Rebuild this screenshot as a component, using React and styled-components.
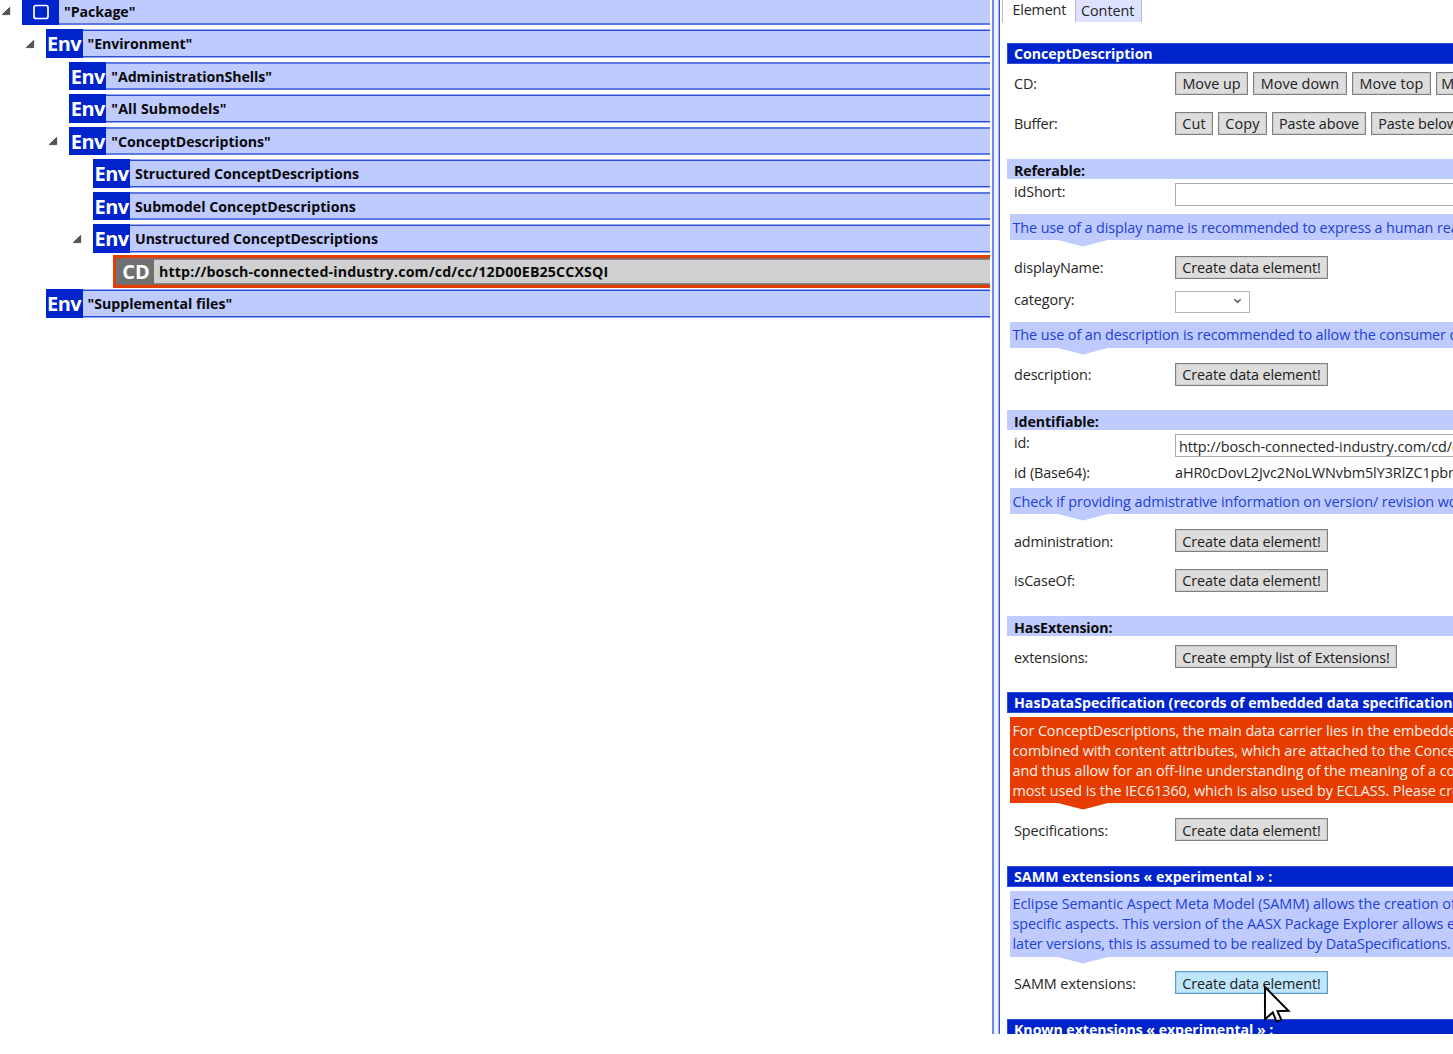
import React from 'react';
import styled, { createGlobalStyle } from 'styled-components';

const GlobalStyle = createGlobalStyle`
  * { box-sizing: border-box; }
  body { margin: 0; background: #fff; overflow: hidden; }
`;

const Window = styled.div`
  display: flex;
  width: 1453px;
  height: 1034px;
  overflow: hidden;
  font-family: "Open Sans", "Noto Sans", sans-serif;
  font-size: 14.4px;
  color: #262626;
  white-space: nowrap;
  cursor: default;
`;

const Label = styled.span`
  letter-spacing: ${(p) => p.$ls ?? -0.1}px;
`;

/* ---------- tree ---------- */

const Tree = styled.div`
  display: flex;
  flex-direction: column;
  width: 990px;
  flex: none;
  margin-top: -3px;
`;

const TreeRow = styled.div`
  display: flex;
  align-items: center;
  height: ${(p) => (p.$crisp ? 29 : 28)}px;
  margin-bottom: 4px;
  padding-left: ${(p) => p.$indent}px;
`;

const Toggle = styled.svg`
  flex: none;
  width: 10px;
  height: 10px;
  margin: 0 11px 0 -21px;
`;

const Bar = styled.div`
  display: flex;
  flex: 1;
  align-self: stretch;
  border: solid ${(p) => (p.$crisp ? '#96a6f0' : '#5f79e2')};
  border-width: 1px 0;
  box-shadow: inset 0 1px ${(p) => (p.$crisp ? '#2b4cd8' : '#5f79e2')},
    inset 0 -1px ${(p) => (p.$crisp ? '#2b4cd8' : '#5f79e2')};
  background: #bfcaff;
`;

const Selected = styled.div`
  display: flex;
  flex: 1;
  height: 33px;
  margin: 0 0 0 -4px;
  border: 3px solid #e43d02;
  border-right: 0;

  & > div {
    border-color: #8a6a5c;
    box-shadow: inset 0 1px #858585, inset 0 -1px #858585;
    background: #d0d0d0;
  }
`;

const Badge = styled.div`
  display: flex;
  align-items: center;
  justify-content: center;
  width: ${(p) => (p.$gray ? 38 : 37)}px;
  padding-top: ${(p) => (p.$drop ? 1 : 0)}px;
  margin: ${(p) => (p.$gray ? '0' : '-1px 0')};
  ${(p) => p.$gray && 'padding-left: 2px;'}
  background: ${(p) => (p.$gray ? '#707070' : '#0024cc')};
  color: #fff;
  font-size: 20px;
  font-weight: 700;
  line-height: 20px;
  letter-spacing: ${(p) => (p.$gray ? 0 : -0.6)}px;
`;

const NodeName = styled.div`
  align-self: center;
  padding-top: ${(p) => (p.$drop ? 1 : 0)}px;
  margin-left: 5px;
  font-size: 14.2px;
  font-weight: 700;
  line-height: 20px;
  color: #0a0a0a;
  letter-spacing: ${(p) => p.$ls}px;
`;

/* ---------- splitter ---------- */

const Splitter = styled.div`
  flex: none;
  width: 8px;
  margin-left: 2px;
  border-left: 2px solid #6f87e8;
  border-right: 1px solid #3552d8;
  background: #eef1fd;
  box-shadow: inset -1px 0 #a3b2f1;
`;

/* ---------- editor panel ---------- */

const Panel = styled.div`
  display: flex;
  flex-direction: column;
  flex: 1;
  min-width: 0;
  margin-left: 2px;
  overflow: hidden;
`;

const Tabs = styled.div`
  display: flex;
  flex: none;
  height: 23px;
`;

const Tab = styled.div`
  height: ${(p) => (p.$active ? 23 : 22)}px;
  width: ${(p) => (p.$active ? 73 : 67)}px;
  padding-left: ${(p) => (p.$active ? 9.5 : 5)}px;
  border-left: 1px solid #b9b9bd;
  border-right: ${(p) => (p.$active ? 0 : '1px solid #b9b9bd')};
  background: ${(p) => (p.$active ? '#fff' : '#dce2ff')};
  line-height: ${(p) => (p.$active ? 19 : 21)}px;
`;

const Header = styled.div`
  flex: none;
  height: ${(p) => (p.$dark ? 21 : 20)}px;
  margin: ${(p) => p.$top}px 0 0 5px;
  padding-left: 7px;
  border: ${(p) => (p.$dark ? '1px solid #2f4fda' : '0')};
  border-right: 0;
  ${(p) => p.$dark && 'padding-left: 6px;'}
  background: ${(p) => (p.$dark ? '#0024cc' : '#bfcaff')};
  color: ${(p) => (p.$dark ? '#fff' : '#0a0a0a')};
  font-size: 14.2px;
  font-weight: 700;
  line-height: ${(p) => (p.$dark ? 20 : 23)}px;
`;

const Field = styled.div`
  --drop: ${(p) => (p.$drop ? 1 : 0)}px;
  display: grid;
  grid-template-columns: 161px 1fr;
  align-items: start;
  flex: none;
  height: 23px;
  margin: ${(p) => p.$top}px 0 0 12px;
`;

const FieldName = styled.div`
  margin-top: ${(p) => p.$shift || 0}px;
  padding-top: var(--drop);
  line-height: 23px;
  letter-spacing: ${(p) => p.$ls ?? -0.1}px;
`;

const Buttons = styled.div`
  display: flex;
  gap: 5px;
`;

const Button = styled.button`
  flex: none;
  width: ${(p) => p.$w}px;
  height: 23px;
  padding: calc(var(--drop) * 2) 0 0;
  border: 1px solid ${(p) => (p.$hover ? '#5c9cc4' : '#808080')};
  background: ${(p) => (p.$hover ? '#bee6fd' : '#dddddd')};
  box-shadow: inset 0 0 0 1px ${(p) => (p.$hover ? '#a9d6f0' : '#cdcdcd')};
  color: #202020;
  font: inherit;
  line-height: 19px;
  white-space: nowrap;
  letter-spacing: ${(p) => p.$ls ?? -0.1}px;
`;

const TextBox = styled.div`
  height: 23px;
  padding-left: 3px;
  border: 1px solid #abadb3;
  border-right: 0;
  background: #fff;
  line-height: 23px;
  letter-spacing: -0.07px;
`;

const Combo = styled.div`
  display: flex;
  align-items: center;
  justify-content: flex-end;
  width: 75px;
  height: 22px;
  padding: 0 7px 2px 0;
  border: 1px solid #b4b4b8;
  background: #fff;
`;

const Plain = styled.div`
  line-height: 23px;
  letter-spacing: -0.06px;
`;

const Hint = styled.div`
  position: relative;
  flex: none;
  height: ${(p) => p.$h}px;
  margin: ${(p) => p.$top}px 0 0 8px;
  padding: ${(p) => p.$pad ?? 4}px 0 0 2.5px;
  background: ${(p) => (p.$alert ? '#e63c00' : '#bfcaff')};
  color: ${(p) => (p.$alert ? '#fff0e8' : '#2140d6')};
  line-height: 20px;

  &::after {
    content: '';
    position: absolute;
    top: 100%;
    left: 48px;
    width: 50px;
    height: 6.5px;
    background: inherit;
    clip-path: polygon(0 0, 100% 0, 50% 100%);
  }
`;

const Line = styled.div`
  letter-spacing: ${(p) => p.$ls}px;
`;

const Pointer = styled.svg`
  position: absolute;
  left: 1263px;
  top: 984px;
  width: 30px;
  height: 42px;
`;

const nodes = [
  { name: '"Package"', indent: 22, open: true, badge: 'box', ls: -0.07 },
  { name: '"Environment"', indent: 45.5, open: true, ls: -0.06 },
  { name: '"AdministrationShells"', indent: 69.3, ls: -0.07 },
  { name: '"All Submodels"', indent: 69.3, ls: 0.15 },
  { name: '"ConceptDescriptions"', indent: 69.3, open: true, ls: -0.03 },
  { name: 'Structured ConceptDescriptions', indent: 93, ls: -0.09 },
  { name: 'Submodel ConceptDescriptions', indent: 93, ls: 0 },
  { name: 'Unstructured ConceptDescriptions', indent: 93, open: true, ls: -0.09 },
  { name: 'http://bosch-connected-industry.com/cd/cc/12D00EB25CCXSQI', indent: 117, selected: true, ls: 0.145 },
  { name: '"Supplemental files"', indent: 45.5, ls: -0.03 },
];

function TreeNode({ node, index }) {
  const crisp = index % 2 === 1;
  const bar = (
    <Bar $crisp={crisp}>
      <Badge $gray={node.selected} $drop={!crisp}>
        {node.badge === 'box' ? (
          <svg width="18" height="18" viewBox="0 0 18 18">
            <rect x="2" y="2.5" width="14" height="13" rx="2" fill="none" stroke="#fff" strokeWidth="1.7" />
          </svg>
        ) : node.selected ? 'CD' : 'Env'}
      </Badge>
      <NodeName $ls={node.ls} $drop={!crisp}>{node.name}</NodeName>
    </Bar>
  );
  return (
    <TreeRow $crisp={crisp} $indent={node.indent}>
      {node.open && (
        <Toggle viewBox="0 0 10 10">
          <path d="M8.7 1.4V8.6H1.2Z" fill="#555" stroke="#3c3c3c" strokeWidth="0.8" />
        </Toggle>
      )}
      {node.selected ? <Selected>{bar}</Selected> : bar}
    </TreeRow>
  );
}

const Create = (props) => <Button $w={153} $ls={-0.11} {...props}>Create data element!</Button>;

export default function App() {
  return (
    <>
      <GlobalStyle />
      <Window>
        <Tree>
          {nodes.map((n, i) => <TreeNode key={n.name} node={n} index={i} />)}
        </Tree>
        <Splitter />
        <Panel>
          <Tabs>
            <Tab $active><Label $ls={-0.2}>Element</Label></Tab>
            <Tab><Label $ls={-0.05}>Content</Label></Tab>
          </Tabs>

          <Header $dark $top={20}><Label $ls={-0.05}>ConceptDescription</Label></Header>
          <Field $top={8}>
            <FieldName>CD:</FieldName>
            <Buttons>
              <Button $w={73} $ls={0}>Move up</Button>
              <Button $w={94} $ls={0.03}>Move down</Button>
              <Button $w={79} $ls={0.1}>Move top</Button>
              <Button $w={77} $ls={0}>Move end</Button>
            </Buttons>
          </Field>
          <Field $top={17}>
            <FieldName $ls={-0.3}>Buffer:</FieldName>
            <Buttons>
              <Button $w={38} $ls={0.1}>Cut</Button>
              <Button $w={49} $ls={0.15}>Copy</Button>
              <Button $w={94}>Paste above</Button>
              <Button $w={94}>Paste below</Button>
            </Buttons>
          </Field>

          <Header $top={24}><Label $ls={-0.15}>Referable:</Label></Header>
          <Field $top={4}>
            <FieldName $ls={-0.15} $shift={-3}>idShort:</FieldName>
            <TextBox />
          </Field>
          <Hint $top={8} $h={26}>
            <Line $ls={-0.11}>The use of a display name is recommended to express a human readable</Line>
          </Hint>
          <Field $top={16}>
            <FieldName $ls={-0.13}>displayName:</FieldName>
            <Buttons><Create /></Buttons>
          </Field>
          <Field $top={12}>
            <FieldName $ls={-0.1} $shift={-3}>category:</FieldName>
            <Combo>
              <svg width="9" height="6" viewBox="0 0 9 6">
                <path d="M1.3 1.2L4.5 4.3L7.7 1.2" fill="none" stroke="#555" strokeWidth="1.5" />
              </svg>
            </Combo>
          </Field>
          <Hint $top={8} $h={26} $pad={3}>
            <Line $ls={-0.09}>The use of an description is recommended to allow the consumer of</Line>
          </Hint>
          <Field $top={15}>
            <FieldName $ls={-0.13}>description:</FieldName>
            <Buttons><Create /></Buttons>
          </Field>

          <Header $top={24}><Label $ls={-0.09}>Identifiable:</Label></Header>
          <Field $top={4}>
            <FieldName $shift={-3} $ls={-0.2}>id:</FieldName>
            <TextBox>http://bosch-connected-industry.com/cd/cc</TextBox>
          </Field>
          <Field $top={4}>
            <FieldName $shift={-0.5}>id (Base64):</FieldName>
            <Plain>aHR0cDovL2Jvc2NoLWNvbm5lY3RlZC1pbmR1</Plain>
          </Field>
          <Hint $top={4} $h={26}>
            <Line $ls={-0.07}>Check if providing admistrative information on version/ revision would</Line>
          </Hint>
          <Field $top={15} $drop>
            <FieldName $ls={-0.2}>administration:</FieldName>
            <Buttons><Create /></Buttons>
          </Field>
          <Field $top={17}>
            <FieldName $ls={-0.15}>isCaseOf:</FieldName>
            <Buttons><Create /></Buttons>
          </Field>

          <Header $top={24}><Label $ls={-0.13}>HasExtension:</Label></Header>
          <Field $top={9} $drop>
            <FieldName $ls={-0.22}>extensions:</FieldName>
            <Buttons><Button $w={222}>Create empty list of Extensions!</Button></Buttons>
          </Field>

          <Header $dark $top={24}>
            <Label $ls={-0.02}>HasDataSpecification (records of embedded data specification):</Label>
          </Header>
          <Hint $alert $top={4} $h={86}>
            <Line $ls={-0.08}>For ConceptDescriptions, the main data carrier lies in the embedded</Line>
            <Line $ls={-0.07}>combined with content attributes, which are attached to the Concept</Line>
            <Line $ls={-0.08}>and thus allow for an off-line understanding of the meaning of a concept</Line>
            <Line $ls={-0.08}>most used is the IEC61360, which is also used by ECLASS. Please create</Line>
          </Hint>
          <Field $top={15} $drop>
            <FieldName>Specifications:</FieldName>
            <Buttons><Create /></Buttons>
          </Field>

          <Header $dark $top={25}><Label $ls={0.05}>SAMM extensions « experimental » :</Label></Header>
          <Hint $top={4} $h={66} $pad={3}>
            <Line $ls={-0.05}>Eclipse Semantic Aspect Meta Model (SAMM) allows the creation of</Line>
            <Line $ls={-0.1}>specific aspects. This version of the AASX Package Explorer allows editing</Line>
            <Line $ls={-0.12}>later versions, this is assumed to be realized by DataSpecifications.</Line>
          </Hint>
          <Field $top={14} $drop>
            <FieldName $ls={-0.05}>SAMM extensions:</FieldName>
            <Buttons><Create $hover /></Buttons>
          </Field>

          <Header $dark $top={25}><Label $ls={-0.06}>Known extensions « experimental » :</Label></Header>
        </Panel>
      </Window>
      <Pointer viewBox="0 0 30 42">
        <path d="M2 3V35.3L10 28.4L13.7 37.5L18.6 35.6L14.8 27.1L26 26.8Z" transform="scale(0.98 1)" fill="#fff" stroke="#000" strokeWidth="2" />
      </Pointer>
    </>
  );
}
